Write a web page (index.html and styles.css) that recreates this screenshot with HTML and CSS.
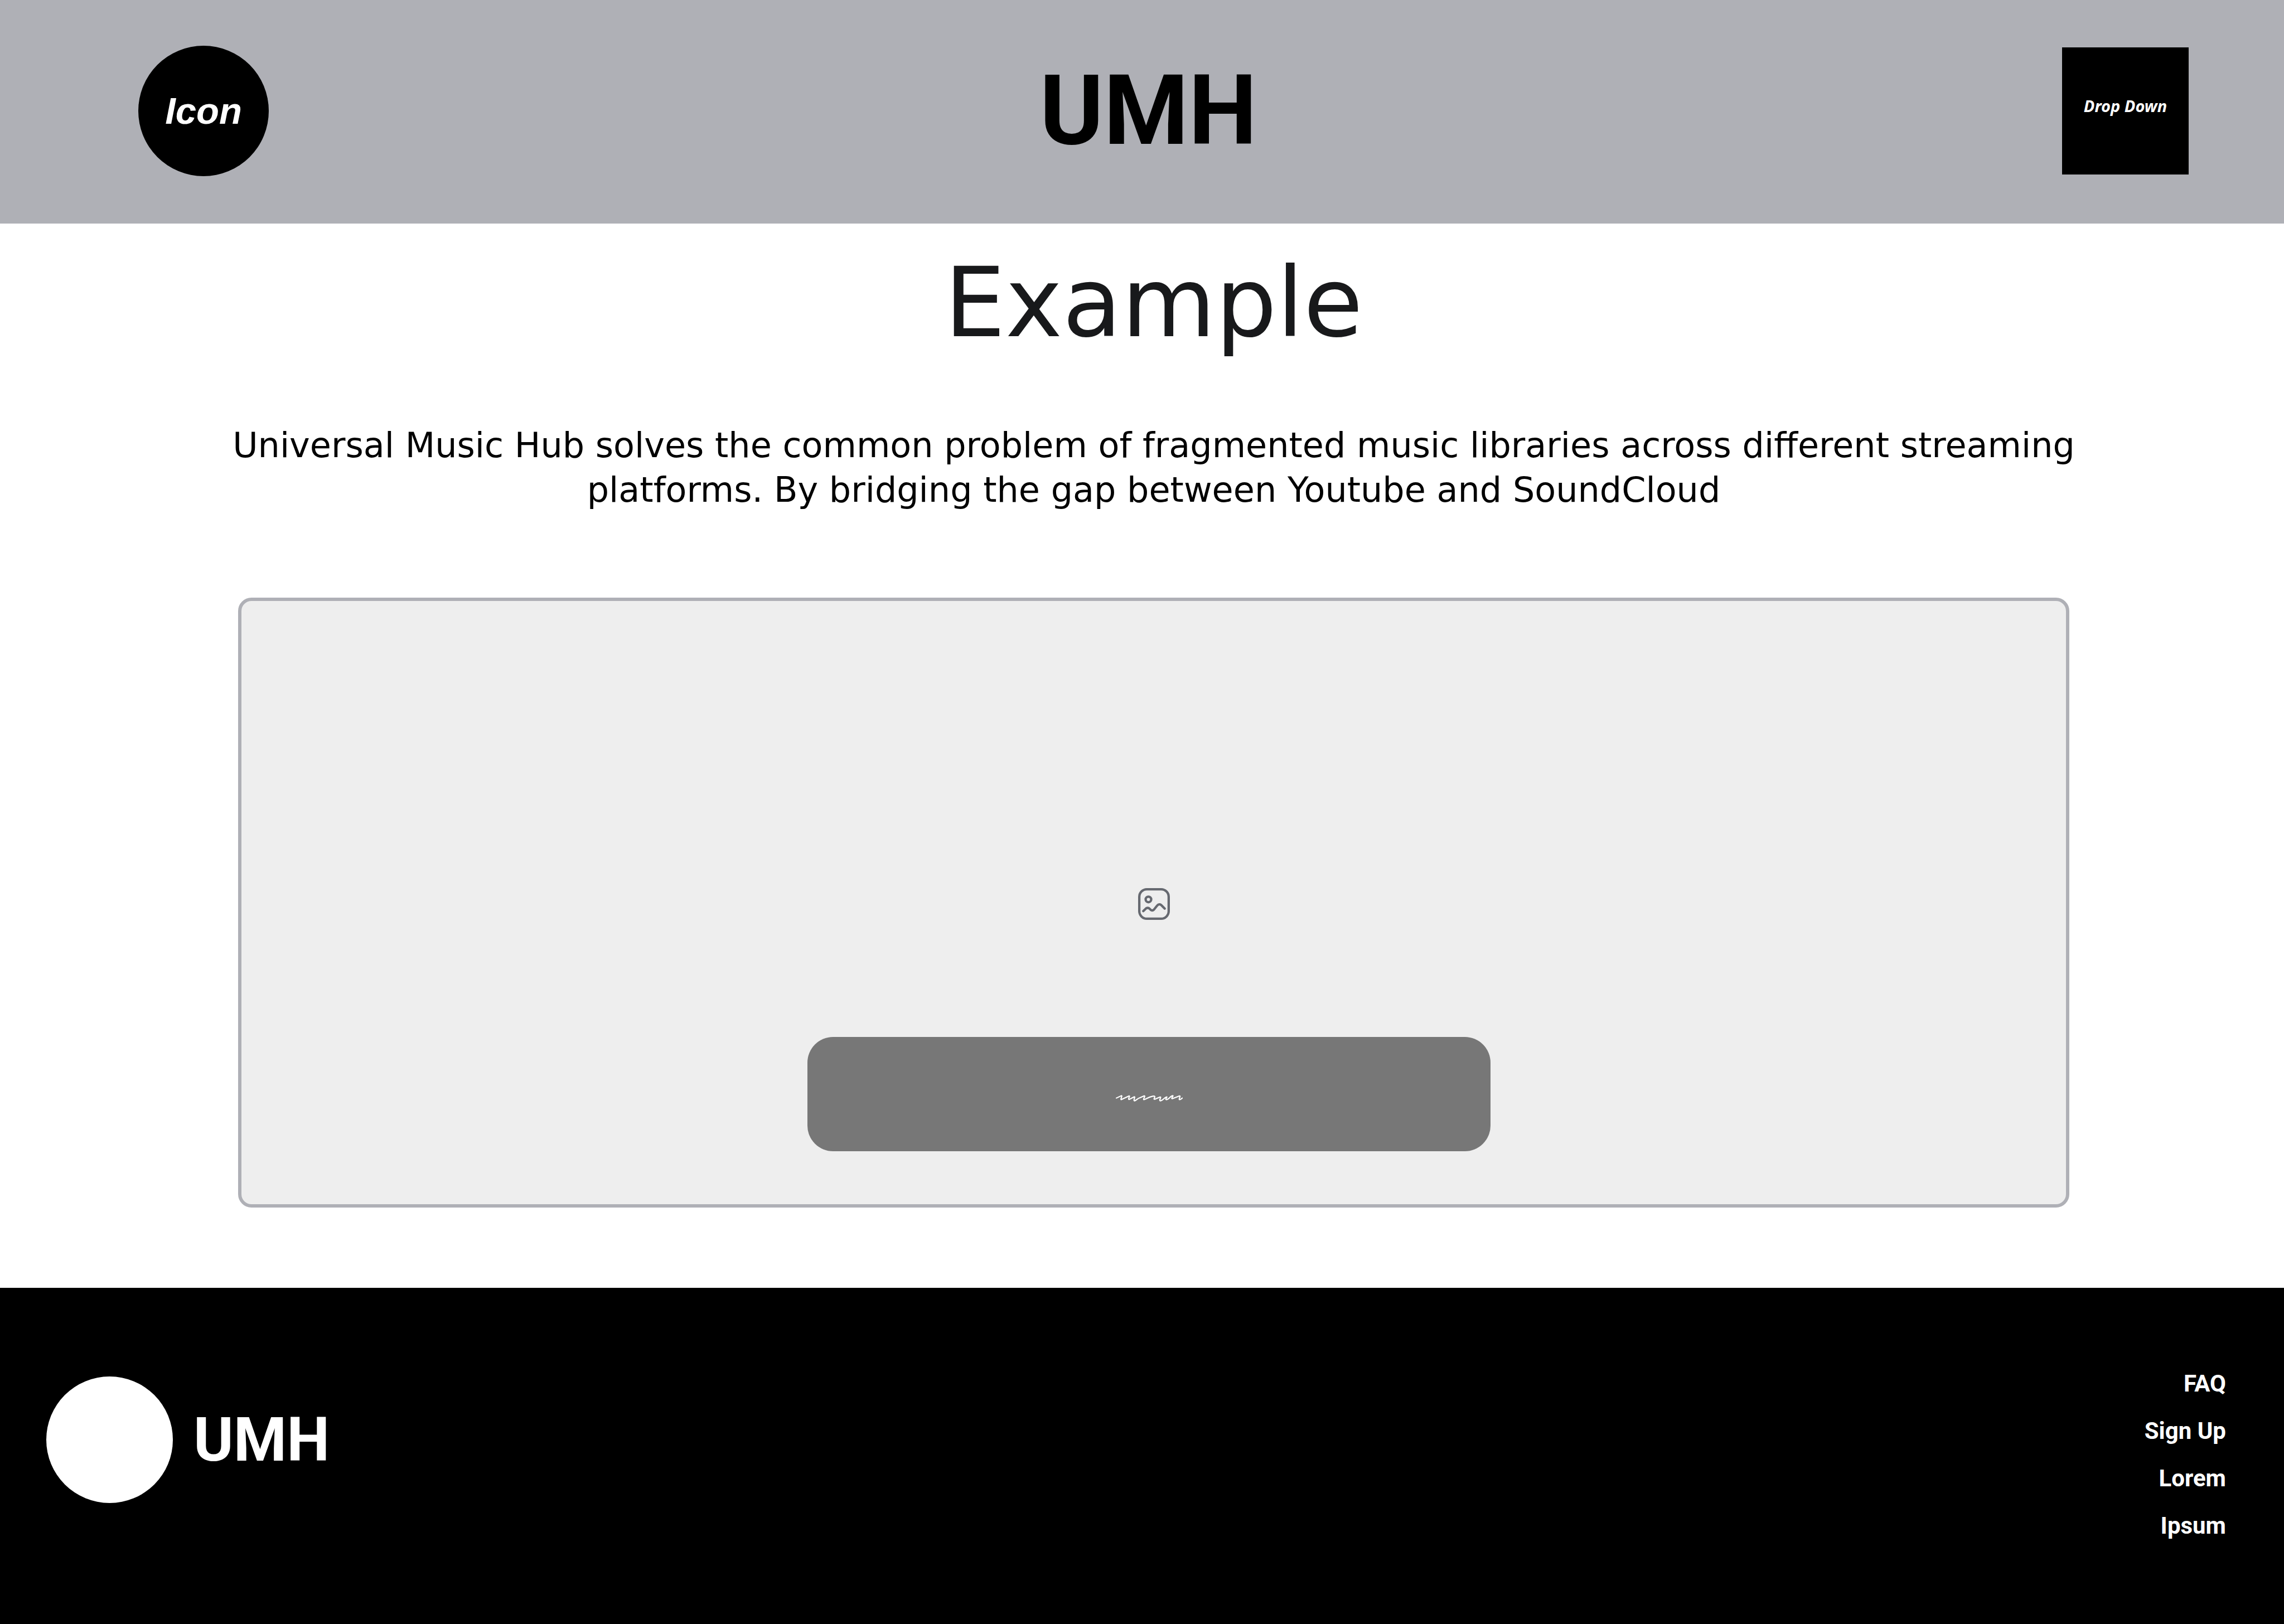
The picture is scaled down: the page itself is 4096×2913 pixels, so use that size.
FILE: index.html
```html
<!DOCTYPE html>
<html lang="en">
<head>
<meta charset="utf-8">
<meta name="viewport" content="width=device-width, initial-scale=1">
<title>UMH</title>
<link rel="stylesheet" href="styles.css">
</head>
<body>
<header class="topbar">
  <a class="topbar-icon" href="#">Icon</a>
  <a class="wordmark" href="#">UMH</a>
  <button class="topbar-menu" type="button">Drop Down</button>
</header>
<main class="content">
  <h1 class="title">Example</h1>
  <p class="intro">Universal Music Hub solves the common problem of fragmented music libraries across different streaming platforms. By bridging the gap between Youtube and SoundCloud</p>
  <section class="panel" aria-label="Preview">
    <svg class="panel-image" viewBox="0 0 80 80" fill="none" stroke="currentColor" stroke-width="6" stroke-linecap="round" stroke-linejoin="round" aria-hidden="true">
      <rect x="3" y="3" width="74" height="74" rx="19"/>
      <circle cx="26" cy="28.500" r="7"/>
      <path d="M13 58L18.500 52.500C21.500 49 26 49 29 52C32.500 56.500 36 58 40 54L47.500 44.500C51 40 55.500 40 59 43.500L67 51.500"/>
    </svg>
    <button class="panel-action" type="button" aria-label="Action">
      <svg class="squiggle" viewBox="0 0 168 16" fill="none" stroke="currentColor" stroke-width="3" stroke-linecap="round" stroke-linejoin="round" aria-hidden="true">
        <path d="M1.500 7.500L14 1.500C17.500 1 11 11 13.500 11.500L33.500 2C37 1.500 29.500 10.500 33.500 11L46 4.500C50.500 2.500 43 14 47 14.500C51 14 55 8 60 7L71 2C76 1 67.500 11 70.500 11.500C80 8 88 2 96 2.500C102 3.500 92 11 98 10.500L111 5C116 3.500 107 14 112 14.500C118 14 123 5 128 4.500C130 4 122 12 128 11.500C134 10 138 1 143 1.500C146 2 137 9 142 9L160 2C164 1.500 157 11 160 11.500C162 12 165 9 167 7.500"/>
      </svg>
    </button>
  </section>
</main>
<footer class="footer">
  <div class="footer-brand">
    <span class="footer-badge"></span>
    <span class="footer-name">UMH</span>
  </div>
  <nav class="footer-links" aria-label="Footer">
    <a href="#">FAQ</a>
    <a href="#">Sign Up</a>
    <a href="#">Lorem</a>
    <a href="#">Ipsum</a>
  </nav>
</footer>
</body>
</html>
```
FILE: styles.css
```css
* { box-sizing: border-box; }

body {
  margin: 0;
  min-height: 100vh;
  display: flex;
  flex-direction: column;
  background: #fff;
  color: #000;
  font-family: "DejaVu Sans", sans-serif;
}

a { color: inherit; text-decoration: none; }

button {
  border: 0;
  padding: 0;
  cursor: pointer;
}

.topbar {
  display: grid;
  grid-template-columns: 1fr auto 1fr;
  align-items: center;
  padding: 82px 171px 85px 248px;
  background: #afb0b6;
}

.topbar-icon {
  display: flex;
  align-items: center;
  justify-content: center;
  width: 234px;
  height: 234px;
  border-radius: 50%;
  background: #000;
  color: #fff;
  font: italic bold 67px/76px "Liberation Sans", sans-serif;
}

.wordmark {
  margin-right: 54px;
  font: bold 174px/204px Roboto, sans-serif;
}

.topbar-menu {
  justify-self: end;
  width: 227px;
  height: 228px;
  padding-bottom: 18px;
  background: #000;
  color: #fff;
  font: italic bold 29px/40px "Noto Sans", sans-serif;
}

.content {
  flex: 1;
  padding: 40px 385px 143px 427px;
}

.title {
  margin: 0 0 114px;
  color: #18191b;
  font-size: 173px;
  font-weight: normal;
  line-height: 204px;
  text-align: center;
}

.intro {
  margin: 0 -20px 153px;
  font-size: 62px;
  line-height: 80px;
  text-align: center;
}

.panel {
  display: flex;
  flex-direction: column;
  align-items: center;
  gap: 210px;
  padding: 515px 0 95px;
  border: 6px solid #afb0b6;
  border-radius: 24px;
  background: #eee;
}

.panel-image {
  width: 57px;
  height: 57px;
  color: #666970;
}

.panel-action {
  display: flex;
  align-items: center;
  justify-content: center;
  width: 1225px;
  height: 205px;
  margin-right: 17px;
  padding-top: 14px;
  border-radius: 46px;
  background: #777;
  color: #fff;
}

.squiggle {
  width: 120px;
  height: 12px;
}

.footer {
  display: flex;
  justify-content: space-between;
  align-items: flex-start;
  padding: 147px 104px 152px 83px;
  background: #000;
  color: #fff;
  font-family: Roboto, sans-serif;
  font-weight: bold;
}

.footer-brand {
  display: flex;
  align-items: center;
  gap: 37px;
  padding-top: 12px;
}

.footer-badge {
  width: 227px;
  height: 227px;
  border-radius: 50%;
  background: #fff;
}

.footer-name {
  font-size: 109px;
  line-height: 128px;
}

.footer-links {
  display: flex;
  flex-direction: column;
  align-items: flex-end;
  gap: 36px;
  font-size: 42px;
  line-height: 49px;
}
```
